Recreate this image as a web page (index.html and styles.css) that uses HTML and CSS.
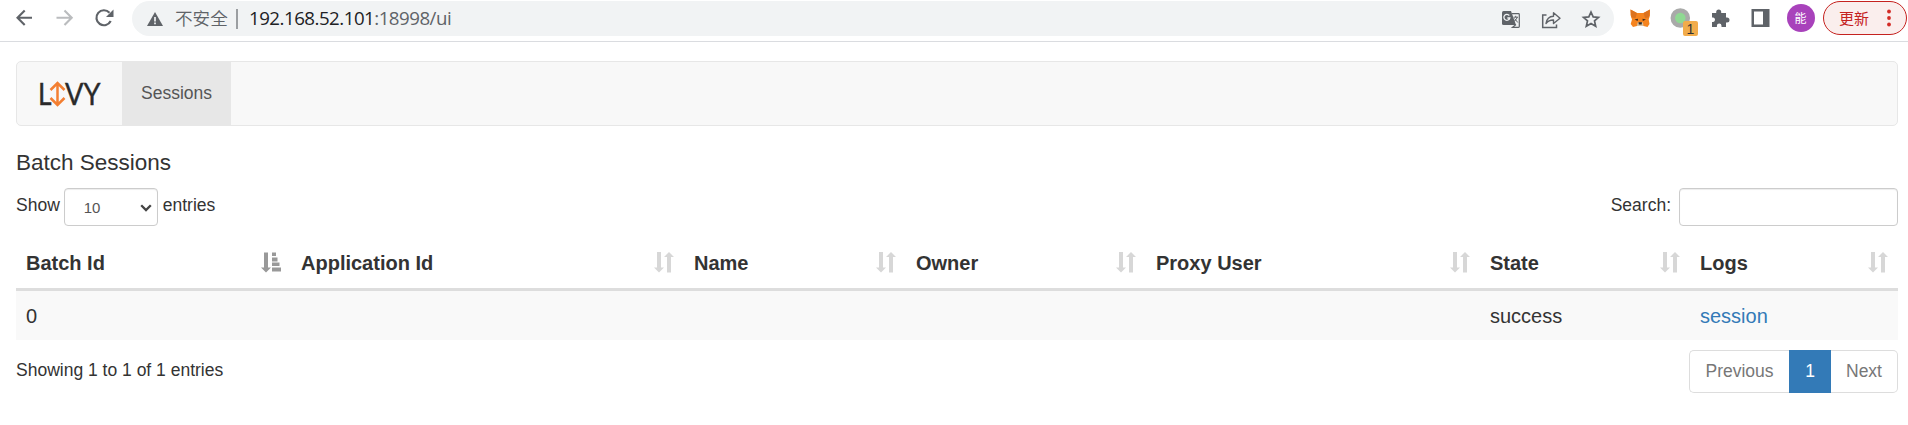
FILE: index.html
```
<!DOCTYPE html>
<html lang="en">
<head>
<meta charset="utf-8">
<title>Livy - Sessions</title>
<link rel="stylesheet" href="styles.css">
</head>
<body>
<header class="browser">
  <div class="nav-buttons">
    <svg class="cell" viewBox="0 0 40 36"><path d="M32 17.700H18M24.700 10.500L17.500 17.700L24.700 25" fill="none" stroke="#5f6368" stroke-width="2.100"/></svg>
    <svg class="cell" viewBox="0 0 40 36"><path d="M16.500 17.700H31M24.500 10.500L31.700 17.700L24.500 25" fill="none" stroke="#babcbe" stroke-width="2.100"/></svg>
    <svg class="cell" viewBox="0 0 40 36"><path d="M30.700 21A7.500 7.500 0 1 1 29.500 12.700" fill="none" stroke="#5f6368" stroke-width="2.200"/><path d="M33.500 9.500V17H26z" fill="#5f6368"/></svg>
  </div>
  <div class="omnibox">
    <svg class="warning" viewBox="0 0 16 14"><path d="M8 0L16 14H0z" fill="#5f6368"/><path d="M8 5V9.500M8 10.500V12.200" stroke="#f1f3f4" stroke-width="1.700"/></svg>
    <span class="insecure">不安全</span>
    <span class="divider"></span>
    <span class="url"><b>192.168.52.101</b>:18998/ui</span>
    <div class="page-actions">
      <svg class="cell" viewBox="0 0 40 36"><path d="M12.500 10H20L25 24H12.500Q11 24 11 22.500V11.500Q11 10 12.500 10Z" fill="#5f6368"/><path d="M20.800 12.700H27.500Q28.300 12.700 28.300 13.500V25.500Q28.300 26.300 27.500 26.300H21.500L25 23.500" fill="none" stroke="#5f6368" stroke-width="1.200"/><path d="M22.500 16.200H27M24.700 14.800V16.200M26.300 16.200Q25.500 19 22.800 20.500M23.500 17.500L26.800 21.500" fill="none" stroke="#5f6368" stroke-width="1"/><path d="M18.300 14.500A3 3 0 1 0 18.800 17H16.300" fill="none" stroke="#f1f3f4" stroke-width="1.300"/></svg>
      <svg class="cell" viewBox="0 0 40 36"><path d="M15.500 14H11.700V26.500H25.500V23.500" fill="none" stroke="#5f6368" stroke-width="1.500"/><path d="M15 22.500Q16 15.500 22.500 15.200V11.700L29 17.200L22.500 22.500V19Q18 18.800 15 22.500Z" fill="none" stroke="#5f6368" stroke-width="1.400" stroke-linejoin="round"/></svg>
      <svg class="cell" viewBox="0 0 40 36"><path d="M20 11L22.200 15.900L27.500 16.400L23.500 19.900L24.700 25.200L20 22.400L15.300 25.200L16.500 19.900L12.500 16.400L17.800 15.900Z" fill="none" stroke="#5f6368" stroke-width="1.700"/></svg>
    </div>
  </div>
  <div class="extensions">
    <svg class="cell" viewBox="0 0 40 36"><path d="M10.500 9.500L17 13H23.500L30 9.500L30 15.500L28.700 19.500L29.500 24L27.500 27L23.500 26H17L13 27L10.700 24L12 19.500L10.500 15Z" fill="#f5841f"/><path d="M10.500 9.500L17 13L15.500 18L11.500 17.500zM30 9.500L23.500 13L25 18L28.800 17.500z" fill="#dc721f"/><path d="M14.500 19.500L18 18.700L17.700 21zM26 19.500L22.500 18.700L22.800 21z" fill="#3d2b1f"/><path d="M17.500 22.500H23L23.500 26H17z" fill="#d8c3a5"/><path d="M18.500 22.300H22L21.700 24.500H18.800z" fill="#2b2b2b"/></svg>
    <div class="cell counter">
      <svg class="cell" viewBox="0 0 40 36"><circle cx="20.300" cy="18" r="7.500" fill="#8fd992" stroke="#a9aaa9" stroke-width="4.500"/></svg>
      <span class="badge">1</span>
    </div>
    <svg class="cell" viewBox="0 0 40 36"><path d="M12 13H16.200V11.900A2.500 2.500 0 0 1 21.200 11.900V13H26V17.500H27A2.500 2.500 0 0 1 27 22.500H26V27H21.500V25.800A2.300 2.300 0 0 0 16.900 25.800V27H12V22H13.200A2.300 2.300 0 0 0 13.200 17.500H12Z" fill="#5f6368"/></svg>
    <svg class="cell" viewBox="0 0 40 36"><path d="M11.500 9H29.500V27H11.500zM14 11.500V24.500H23V11.500z" fill="#5f6368" fill-rule="evenodd"/></svg>
    <span class="cell avatar-cell"><span class="avatar">能</span></span>
    <span class="update">更新<svg class="dots" viewBox="0 0 4 18"><g fill="#d32b25"><circle cx="2" cy="2.500" r="1.900"/><circle cx="2" cy="9" r="1.900"/><circle cx="2" cy="15.500" r="1.900"/></g></svg></span>
  </div>
</header>
<main class="page">
  <nav class="navbar">
    <a class="brand"><svg class="logo" viewBox="0 0 64 26"><g class="logo-text"><text x="-1" y="24" textLength="13.500" lengthAdjust="spacingAndGlyphs">L</text><text x="26" y="24" textLength="35.500" lengthAdjust="spacingAndGlyphs">VY</text></g><path d="M18.500 2.500V23.500M11.500 9L18.500 2L25.500 9M11.500 17L18.500 24L25.500 17" fill="none" stroke="#f37f32" stroke-width="2.500"/></svg></a>
    <a class="tab">Sessions</a>
  </nav>
  <h4 class="title">Batch Sessions</h4>
  <div class="controls">
    <label class="length">Show <span class="select">10<svg class="chevron" viewBox="0 0 12 8"><path d="M1.200 1.200L6 6L10.800 1.200" fill="none" stroke="#444" stroke-width="2.300"/></svg></span> entries</label>
    <label class="search">Search:<input class="search-input" type="text"></label>
  </div>
  <svg class="symbols">
    <symbol id="both" viewBox="0 0 20 21"><path d="M3 0H7V15.500H10L5 20.500L0 15.500H3zM13 20.500H17V5H20L15 0L10 5H13z"/></symbol>
    <symbol id="asc" viewBox="0 0 20 21"><path d="M3 0.500H7V15.500H10L5 20.500L0 15.500H3zM11 0.500H15V4H11zM11 5.500H16.500V9.500H11zM11 10.500H18.500V14H11zM11 15.500H20V19.500H11z"/></symbol>
  </svg>
  <div class="table">
    <div class="row head">
      <div class="col">Batch Id<svg class="sort active"><use href="#asc"/></svg></div>
      <div class="col">Application Id<svg class="sort"><use href="#both"/></svg></div>
      <div class="col">Name<svg class="sort"><use href="#both"/></svg></div>
      <div class="col">Owner<svg class="sort"><use href="#both"/></svg></div>
      <div class="col">Proxy User<svg class="sort"><use href="#both"/></svg></div>
      <div class="col">State<svg class="sort"><use href="#both"/></svg></div>
      <div class="col">Logs<svg class="sort"><use href="#both"/></svg></div>
    </div>
    <div class="row body">
      <div class="col">0</div><div class="col"></div><div class="col"></div><div class="col"></div><div class="col"></div>
      <div class="col">success</div><div class="col"><a class="link">session</a></div>
    </div>
  </div>
  <footer class="footer">
    <span class="info">Showing 1 to 1 of 1 entries</span>
    <div class="pagination"><span class="pager prev">Previous</span><span class="pager current">1</span><span class="pager next">Next</span></div>
  </footer>
</main>
</body>
</html>
```

FILE: styles.css
```
* { box-sizing: border-box; }
body {
  margin: 0;
  background: #fff;
  color: #333;
  font: 17.5px/25px "Liberation Sans", Arial, sans-serif;
}
svg { display: block; }

/* Browser toolbar */
.browser {
  display: flex;
  height: 42px;
  border-bottom: 1px solid #dadce0;
}
.cell { flex: none; width: 40px; height: 36px; }
.nav-buttons { display: flex; width: 132px; height: 36px; }
.omnibox {
  display: flex;
  align-items: center;
  width: 1482px;
  height: 35px;
  margin-top: 1px;
  padding-left: 15px;
  border-radius: 18px;
  background: #f1f3f4;
}
.warning { width: 16px; height: 14px; margin-top: 1px; }
.insecure {
  width: 61px;
  height: 35px;
  margin-left: 12px;
  font: 350 17.6px/33px "Noto Sans CJK SC", sans-serif;
  color: #5f6368;
}
.divider { width: 2px; height: 20px; background: #9b9ea1; }
.url {
  height: 35px;
  margin-left: 11px;
  font: 18.7px/33px "Open Sans", sans-serif;
  letter-spacing: -0.5px;
  color: #5f6368;
}
.url b { font-weight: 400; color: #202124; }
.page-actions { display: flex; margin-left: auto; margin-right: 3px; }
.extensions { display: flex; padding-left: 6px; }
.counter { position: relative; }
.badge {
  position: absolute;
  left: 23px;
  top: 21px;
  width: 15px;
  height: 15px;
  border-radius: 2px;
  background: #f2ac4b;
  color: #333;
  font-size: 14px;
  line-height: 16px;
  text-align: center;
}
.avatar-cell { display: flex; justify-content: center; align-items: center; padding-left: 1px; }
.avatar {
  width: 28px;
  height: 28px;
  border-radius: 50%;
  background: #a842bb;
  color: #fff;
  font: 12px/27px "Noto Sans CJK SC", sans-serif;
  text-align: center;
}
.update {
  display: flex;
  align-items: center;
  width: 84px;
  height: 34px;
  margin: 1px 0 0 3px;
  padding-left: 15px;
  border: 1px solid #c5221f;
  border-radius: 17px;
  background: #faeeed;
  color: #c5221f;
  font: 400 15px/32px "Noto Sans CJK SC", sans-serif;
}
.dots { width: 4px; height: 18px; margin-left: 18px; }

/* Livy page */
.page { padding: 19px 10px 0 16px; }
.navbar {
  display: flex;
  height: 65px;
  border: 1px solid #e7e7e7;
  border-radius: 5px;
  background: #f8f8f8;
}
.brand { width: 105px; padding: 19px 0 0 22px; }
.logo { width: 64px; height: 26px; overflow: visible; }
.logo-text {
  font: 30px Lato, sans-serif;
  fill: #2a2a2a;
  stroke: #2a2a2a;
  stroke-width: 0.4px;
}
.tab {
  width: 109px;
  background: #e7e7e7;
  color: #555;
  line-height: 62px;
  text-align: center;
}
.title { margin: 24px 0 0; font-size: 22.5px; font-weight: 400; line-height: 26px; }
.controls { display: flex; justify-content: space-between; height: 38px; margin-top: 12px; }
.length, .search { display: flex; line-height: 35px; }
.select {
  display: flex;
  align-items: center;
  justify-content: space-between;
  width: 94px;
  height: 38px;
  margin: 0 5px 0 4px;
  padding: 0 5px 0 19px;
  border: 1px solid #ccc;
  border-radius: 4px;
  box-shadow: inset 0 1px 1px rgba(0, 0, 0, .075);
  color: #555;
  font-size: 15px;
}
.chevron { width: 12px; height: 8px; margin-top: 2px; }
.search-input {
  width: 219px;
  height: 38px;
  margin-left: 8px;
  border: 1px solid #ccc;
  border-radius: 4px;
  box-shadow: inset 0 1px 1px rgba(0, 0, 0, .075);
}
.symbols { width: 0; height: 0; }
.table { margin-top: 12px; font-size: 20px; }
.row { display: grid; grid-template-columns: 275px 393px 222px 240px 334px 210px 208px; }
.col { display: flex; justify-content: space-between; padding: 0 10px; }
.head { height: 53px; border-bottom: 3px solid #ddd; font-weight: 700; line-height: 50px; }
.body { height: 49px; background: #f9f9f9; line-height: 51px; }
.sort { width: 20px; height: 21px; margin-top: 14px; fill: #d7d7d7; }
.active { fill: #999; }
.link { color: #337ab7; }
.footer { display: flex; justify-content: space-between; margin-top: 10px; }
.info { line-height: 41px; }
.pagination { display: flex; height: 43px; }
.pager { border: 1px solid #ddd; color: #777; line-height: 40px; text-align: center; }
.prev { width: 100px; border-right: 0; border-radius: 5px 0 0 5px; }
.current { width: 42px; border-color: #337ab7; background: #337ab7; color: #fff; }
.next { width: 67px; border-left: 0; border-radius: 0 5px 5px 0; }
```
